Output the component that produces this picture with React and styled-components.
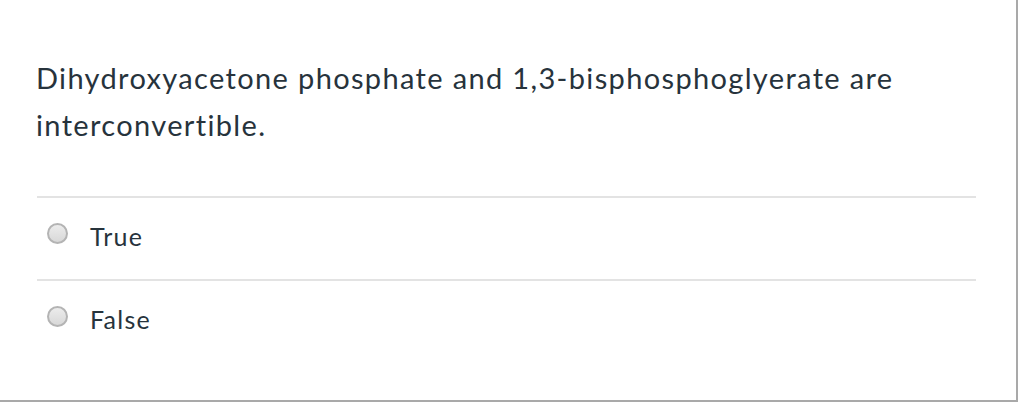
import React, { useState } from "react";
import styled, { createGlobalStyle } from "styled-components";

const GlobalStyle = createGlobalStyle`
  html, body {
    margin: 0;
    padding: 0;
    background: #ffffff;
  }
  * {
    box-sizing: border-box;
  }
`;

const Card = styled.div`
  width: 1018px;
  height: 402px;
  background: #ffffff;
  border-right: 2px solid #a9a9a9;
  border-bottom: 2px solid #a9a9a9;
  padding: 54px 40px 0 36px;
  font-family: Lato, "Open Sans", sans-serif;
  color: #27333c;
`;

const Question = styled.p`
  margin: 0 0 48px;
  font-size: 29px;
  line-height: 47px;
  letter-spacing: 1.35px;
  font-variant-ligatures: common-ligatures;
`;

const Answers = styled.div`
  display: flex;
  flex-direction: column;
  margin-left: 1px;
`;

const AnswerRow = styled.label`
  display: flex;
  align-items: center;
  gap: 22px;
  height: 83px;
  padding: 0 0 10px 10px;
  border-top: 2px solid #e3e3e3;
  cursor: pointer;
`;

const Radio = styled.span`
  flex: none;
  width: 21px;
  height: 21px;
  border-radius: 50%;
  border: 2px solid ${(p) => (p.checked ? "#2d3b45" : "#b4b4b4")};
  background: ${(p) =>
    p.checked
      ? "radial-gradient(circle, #2d3b45 0 4px, #e8e8e8 5px)"
      : "linear-gradient(#ececec, #d8d8d8)"};
`;

const AnswerText = styled.span`
  font-size: 25px;
  line-height: 30px;
  padding-top: 5px;
  letter-spacing: 1.25px;
`;

const options = ["True", "False"];

const App = () => {
  const [picked, setPicked] = useState(null);

  return (
    <>
      <GlobalStyle />
      <Card>
        <Question>
          Dihydroxyacetone phosphate and 1,3-bisphosphoglyerate are
          interconvertible.
        </Question>
        <Answers>
          {options.map((opt) => (
            <AnswerRow key={opt} onClick={() => setPicked(opt)}>
              <Radio checked={picked === opt} />
              <AnswerText>{opt}</AnswerText>
            </AnswerRow>
          ))}
        </Answers>
      </Card>
    </>
  );
};

export default App;
